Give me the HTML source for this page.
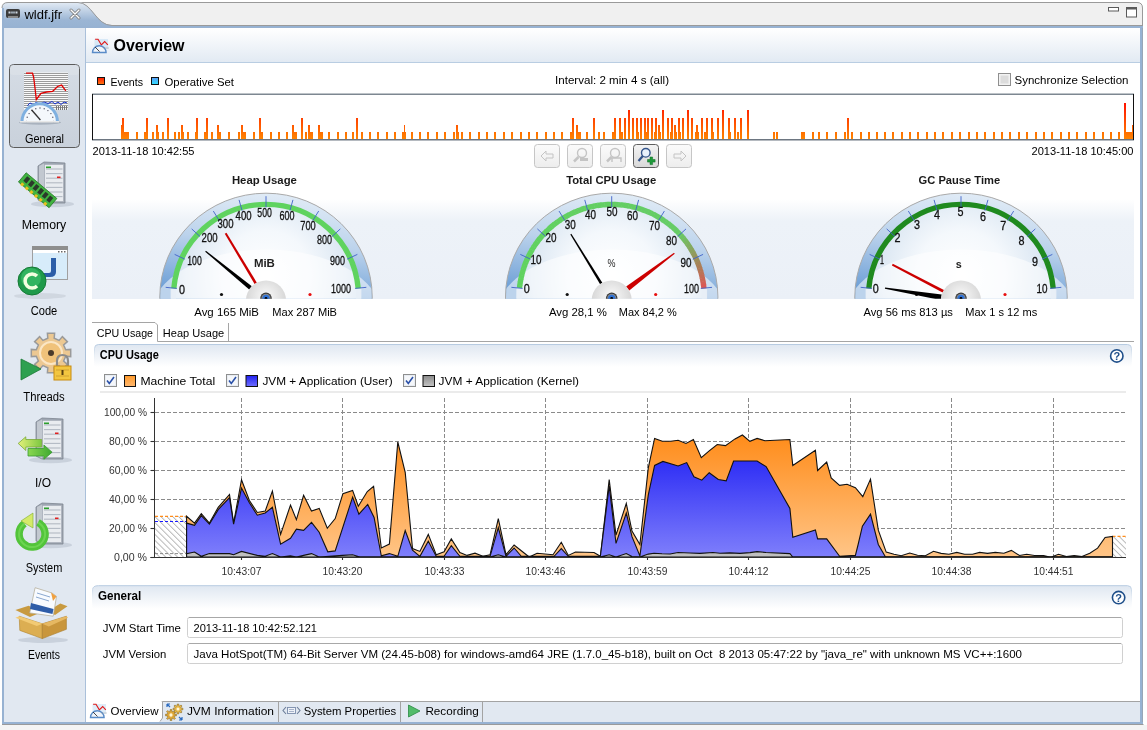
<!DOCTYPE html>
<html><head><meta charset="utf-8"><title>wldf.jfr - Overview</title>
<style>html,body{margin:0;padding:0;background:#fff;overflow:hidden}svg{display:block;will-change:transform}text{font-family:"Liberation Sans", sans-serif}</style>
</head><body>
<svg width="1147" height="730" viewBox="0 0 1147 730">
<defs>
<linearGradient id="tabg" x1="0" y1="0" x2="0" y2="1"><stop offset="0" stop-color="#e4ecf5"/><stop offset="0.7" stop-color="#9bb5d4"/><stop offset="1" stop-color="#97b2d2"/></linearGradient>
<linearGradient id="hdrg" x1="0" y1="0" x2="0" y2="1"><stop offset="0" stop-color="#ffffff"/><stop offset="1" stop-color="#e2eaf3"/></linearGradient>
<linearGradient id="secg" x1="0" y1="0" x2="0" y2="1"><stop offset="0" stop-color="#dfe7f1"/><stop offset="1" stop-color="#ffffff"/></linearGradient>
<linearGradient id="bandg" x1="0" y1="0" x2="0" y2="1"><stop offset="0" stop-color="#ffffff"/><stop offset="0.22" stop-color="#edf2f8"/><stop offset="1" stop-color="#ebf0f7"/></linearGradient>
<linearGradient id="evg" gradientUnits="userSpaceOnUse" x1="0" y1="103" x2="0" y2="139"><stop offset="0" stop-color="#ff1000"/><stop offset="1" stop-color="#ff8400"/></linearGradient>
<linearGradient id="btng" x1="0" y1="0" x2="0" y2="1"><stop offset="0" stop-color="#fbfbfb"/><stop offset="1" stop-color="#ededed"/></linearGradient>
<linearGradient id="btna" x1="0" y1="0" x2="0" y2="1"><stop offset="0" stop-color="#f4f4f4"/><stop offset="1" stop-color="#d8d8d8"/></linearGradient>
<linearGradient id="orng" gradientUnits="userSpaceOnUse" x1="0" y1="435" x2="0" y2="557"><stop offset="0" stop-color="#ff8c1a"/><stop offset="1" stop-color="#ffc587"/></linearGradient>
<linearGradient id="blug" gradientUnits="userSpaceOnUse" x1="0" y1="461" x2="0" y2="557"><stop offset="0" stop-color="#2f2ff5"/><stop offset="1" stop-color="#7f7ffb"/></linearGradient>
<linearGradient id="navbtn" x1="0" y1="0" x2="0" y2="1"><stop offset="0" stop-color="#d5dce5"/><stop offset="1" stop-color="#c9d1db"/></linearGradient>
<radialGradient id="face" cx="0.5" cy="0.95" r="0.62"><stop offset="0" stop-color="#ffffff"/><stop offset="0.55" stop-color="#f3f7fb"/><stop offset="0.8" stop-color="#d6e3f1"/><stop offset="1" stop-color="#9dbde0"/></radialGradient>
<radialGradient id="hub" cx="0.5" cy="0.4" r="0.6"><stop offset="0" stop-color="#fafafa"/><stop offset="1" stop-color="#d0d0d0"/></radialGradient>
<pattern id="hatch" patternUnits="userSpaceOnUse" width="6" height="6" patternTransform="rotate(45)"><rect width="6" height="6" fill="#fff"/><line x1="0" y1="0" x2="0" y2="6" stroke="#a0a0a0" stroke-width="0.8"/></pattern>
<clipPath id="gclip"><rect x="0" y="0" width="1147" height="298.7"/></clipPath>
<linearGradient id="cpuarc" gradientUnits="userSpaceOnUse" x1="680" y1="240" x2="715" y2="290"><stop offset="0" stop-color="#5bd35b"/><stop offset="0.45" stop-color="#a28a55"/><stop offset="1" stop-color="#dc5a5a"/></linearGradient>
</defs>
<rect x="0" y="0" width="1147" height="730" fill="#ffffff"/>
<path d="M78,2 L1137,2 Q1143,2 1143,8 L1143,26 L2,26 Z" fill="#f0f0f0"/>
<path d="M78,2.5 L1137,2.5 Q1142.5,2.5 1142.5,8 L1142.5,724" fill="none" stroke="#9a9a9a" stroke-width="1"/>
<path d="M2,28 L2,8 Q2,2 8,2 L78,2 C92,2 96,25 112,25 L112,28 Z" fill="url(#tabg)"/>
<path d="M2,8 Q2,2.5 8,2.5 L78,2.5 C92,2.5 96,25.5 112,25.5 L1143,25.5" fill="none" stroke="#9a9a9a" stroke-width="1"/>
<rect x="2" y="26" width="1141" height="2" fill="#97b2d2"/>
<rect x="2" y="8" width="2" height="716" fill="#97b2d2"/>
<rect x="1140" y="26" width="2.5" height="698" fill="#97b2d2"/>
<rect x="2" y="722" width="1141" height="2" fill="#97b2d2"/>
<rect x="2" y="724" width="1141.5" height="1" fill="#9a9a9a"/>
<rect x="0" y="725" width="1147" height="5" fill="#f4f4f4"/>
<rect x="4" y="28" width="81" height="694" fill="#e1e8f1"/>
<rect x="85" y="28" width="1" height="694" fill="#aac0da"/>
<rect x="86" y="28" width="1054" height="34" fill="url(#hdrg)"/>
<rect x="86" y="62" width="1054" height="1" fill="#b9cde2"/>
<rect x="6" y="9" width="14" height="9" rx="2" fill="#3c3c3c"/><rect x="8.5" y="11.5" width="2" height="2" fill="#cfd8e2"/><rect x="15.5" y="11.5" width="2" height="2" fill="#cfd8e2"/><rect x="11" y="11.5" width="4" height="2" fill="#9aa5b0"/><rect x="8" y="16" width="10" height="2" fill="#8a8a8a"/>
<text x="24.5" y="19" font-size="12" font-weight="normal" fill="#000" text-anchor="start" textLength="37.5" lengthAdjust="spacingAndGlyphs" >wldf.jfr</text>
<path d="M71,10 L79,18 M79,10 L71,18" stroke="#7a7a7a" stroke-width="3" stroke-linecap="round"/><path d="M71,10 L79,18 M79,10 L71,18" stroke="#fdfdfd" stroke-width="1.4" stroke-linecap="round"/>
<rect x="1108.5" y="7.5" width="10" height="3.5" fill="#fff" stroke="#5a5a5a" stroke-width="1"/>
<rect x="1126.5" y="7.5" width="10" height="9.5" fill="#fff" stroke="#5a5a5a" stroke-width="1"/><rect x="1126.5" y="7.5" width="10" height="2" fill="#5a5a5a"/>
<rect x="9.5" y="64.5" width="70" height="83" rx="4" fill="url(#navbtn)" stroke="#5c5c5c" stroke-width="1"/>
<rect x="10" y="65" width="69" height="10" rx="3" fill="#dde3ea" opacity="0.6"/>
<g><rect x="24" y="72.5" width="44" height="37" fill="#fafafa"/><line x1="24" y1="73.5" x2="68" y2="73.5" stroke="#9c9c9c" stroke-width="1"/><line x1="24" y1="75.5" x2="68" y2="75.5" stroke="#9c9c9c" stroke-width="1"/><line x1="24" y1="77.5" x2="68" y2="77.5" stroke="#9c9c9c" stroke-width="1"/><line x1="24" y1="79.5" x2="68" y2="79.5" stroke="#9c9c9c" stroke-width="1"/><line x1="24" y1="81.5" x2="68" y2="81.5" stroke="#9c9c9c" stroke-width="1"/><line x1="24" y1="83.5" x2="68" y2="83.5" stroke="#9c9c9c" stroke-width="1"/><line x1="24" y1="85.5" x2="68" y2="85.5" stroke="#9c9c9c" stroke-width="1"/><line x1="24" y1="87.5" x2="68" y2="87.5" stroke="#9c9c9c" stroke-width="1"/><line x1="24" y1="89.5" x2="68" y2="89.5" stroke="#9c9c9c" stroke-width="1"/><line x1="24" y1="91.5" x2="68" y2="91.5" stroke="#9c9c9c" stroke-width="1"/><line x1="24" y1="93.5" x2="68" y2="93.5" stroke="#9c9c9c" stroke-width="1"/><line x1="24" y1="95.5" x2="68" y2="95.5" stroke="#9c9c9c" stroke-width="1"/><line x1="24" y1="97.5" x2="68" y2="97.5" stroke="#9c9c9c" stroke-width="1"/><line x1="24" y1="99.5" x2="68" y2="99.5" stroke="#9c9c9c" stroke-width="1"/><line x1="24" y1="101.5" x2="68" y2="101.5" stroke="#9c9c9c" stroke-width="1"/><line x1="24" y1="103.5" x2="68" y2="103.5" stroke="#9c9c9c" stroke-width="1"/><line x1="24" y1="105.5" x2="68" y2="105.5" stroke="#9c9c9c" stroke-width="1"/><line x1="24" y1="107.5" x2="68" y2="107.5" stroke="#9c9c9c" stroke-width="1"/><line x1="56.5" y1="106" x2="56.5" y2="110" stroke="#777" stroke-width="1"/><line x1="58.5" y1="106" x2="58.5" y2="110" stroke="#777" stroke-width="1"/><line x1="60.5" y1="106" x2="60.5" y2="110" stroke="#777" stroke-width="1"/><line x1="62.5" y1="106" x2="62.5" y2="110" stroke="#777" stroke-width="1"/><line x1="64.5" y1="106" x2="64.5" y2="110" stroke="#777" stroke-width="1"/><line x1="66.5" y1="106" x2="66.5" y2="110" stroke="#777" stroke-width="1"/><polyline points="26,73.2 32.5,73.2 33.6,77 35,88 36.3,99.5 41,93.4 46.6,92 52.7,91.3 57.5,86.5 61.6,85.1 65.8,90.9" fill="none" stroke="#e00000" stroke-width="1.3"/><polyline points="27.4,105.7 30,103 33,104.5 36,102.5 40,104 44,102 48,103.5 52,101.5 55,104 58,102 61,104.5 64,102 67,103" fill="none" stroke="#1530d0" stroke-width="1"/><ellipse cx="40" cy="122.5" rx="21" ry="2.2" fill="#9aa4b0" opacity="0.7"/><path d="M20.5,121.5 A19.2,19.2 0 0 1 58.9,121.5 Z" fill="#7fb0e0"/><path d="M23.5,121.5 A16.2,16.2 0 0 1 55.9,121.5 Z" fill="#f4f8fc"/><circle cx="26.5" cy="121.5" r="0.7" fill="#556"/><circle cx="27.2" cy="117.3" r="0.7" fill="#556"/><circle cx="29.1" cy="113.6" r="0.7" fill="#556"/><circle cx="32.1" cy="110.6" r="0.7" fill="#556"/><circle cx="35.8" cy="108.7" r="0.7" fill="#556"/><circle cx="40.0" cy="108.0" r="0.7" fill="#556"/><circle cx="44.2" cy="108.7" r="0.7" fill="#556"/><circle cx="47.9" cy="110.6" r="0.7" fill="#556"/><circle cx="50.9" cy="113.6" r="0.7" fill="#556"/><circle cx="52.8" cy="117.3" r="0.7" fill="#556"/><circle cx="53.5" cy="121.5" r="0.7" fill="#556"/><line x1="31.5" y1="109.8" x2="40.4" y2="120" stroke="#333" stroke-width="1.3"/><rect x="20" y="121" width="39" height="1.5" fill="#e8e8e8"/></g>
<text x="44.5" y="142.5" font-size="12" font-weight="normal" fill="#000" text-anchor="middle" textLength="39" lengthAdjust="spacingAndGlyphs" >General</text>
<ellipse cx="52.5" cy="204" rx="21.6" ry="3.2" fill="#bfc8d3" opacity="0.7"/><path d="M38,166 L44,162 L65,163 L65,203 L44,203 L38,200 Z" fill="#9ea6b2" stroke="#7d8590" stroke-width="0.8"/><path d="M39,166 L44,163.5 L44,202.5 L39,199.5 Z" fill="#c2c8d0"/><rect x="44.5" y="164.5" width="19" height="37" fill="#e9ecf0" stroke="#a3aab4" stroke-width="0.6"/><line x1="46" y1="169.0" x2="62.5" y2="169.0" stroke="#b3bac3" stroke-width="1.1"/><line x1="46" y1="173.6" x2="62.5" y2="173.6" stroke="#b3bac3" stroke-width="1.1"/><line x1="46" y1="178.2" x2="62.5" y2="178.2" stroke="#b3bac3" stroke-width="1.1"/><line x1="46" y1="182.8" x2="62.5" y2="182.8" stroke="#b3bac3" stroke-width="1.1"/><line x1="46" y1="187.4" x2="62.5" y2="187.4" stroke="#b3bac3" stroke-width="1.1"/><line x1="46" y1="192.0" x2="62.5" y2="192.0" stroke="#b3bac3" stroke-width="1.1"/><line x1="46" y1="196.6" x2="62.5" y2="196.6" stroke="#b3bac3" stroke-width="1.1"/><rect x="46" y="166.5" width="5" height="1.6" fill="#2ca02c"/><rect x="57" y="176.5" width="3.5" height="1.6" fill="#e02020"/>
<g transform="translate(37,191) rotate(40)"><rect x="-20" y="-7" width="40" height="12" fill="#41b341" stroke="#2a7d2a" stroke-width="0.8"/><rect x="-17" y="-5" width="4" height="6" fill="#2b3a2b"/><rect x="-11" y="-5" width="4" height="6" fill="#2b3a2b"/><rect x="-5" y="-5" width="4" height="6" fill="#2b3a2b"/><rect x="1" y="-5" width="4" height="6" fill="#2b3a2b"/><rect x="7" y="-5" width="4" height="6" fill="#2b3a2b"/><rect x="13" y="-5" width="4" height="6" fill="#2b3a2b"/><rect x="-17" y="3" width="3" height="3" fill="#e8c020"/><rect x="-11" y="3" width="3" height="3" fill="#e8c020"/><rect x="-5" y="3" width="3" height="3" fill="#e8c020"/><rect x="1" y="3" width="3" height="3" fill="#e8c020"/><rect x="7" y="3" width="3" height="3" fill="#e8c020"/><rect x="13" y="3" width="3" height="3" fill="#e8c020"/></g>
<text x="44" y="229" font-size="12" font-weight="normal" fill="#000" text-anchor="middle" textLength="44.5" lengthAdjust="spacingAndGlyphs" >Memory</text>
<ellipse cx="40" cy="296" rx="26" ry="3" fill="#c4ccd6" opacity="0.6"/>
<rect x="32.5" y="246.5" width="35" height="33" fill="#ffffff" stroke="#a0a0a0" stroke-width="1"/><rect x="32" y="246" width="36" height="4" fill="#8e8e8e"/>
<rect x="33" y="253" width="34" height="26" fill="#d7ecfa"/><rect x="58" y="251" width="1.5" height="1.5" fill="#666"/><rect x="61" y="251" width="1.5" height="1.5" fill="#666"/><rect x="64" y="251" width="1.5" height="1.5" fill="#666"/>
<path d="M51,258 L56,258 L56,272 Q56,277 50,277 L44,277 L44,273 L49,273 Q51,273 51,271 Z" fill="#2b5ea8"/>
<circle cx="32" cy="281" r="14" fill="#1f9a4a" stroke="#157a35" stroke-width="1"/><circle cx="31" cy="278" r="10" fill="#3cbf6a" opacity="0.7"/>
<path d="M37,276 A7,7 0 1 0 37,286" fill="none" stroke="#f4ffe0" stroke-width="3.5"/>
<text x="44" y="315" font-size="12" font-weight="normal" fill="#000" text-anchor="middle" textLength="26.5" lengthAdjust="spacingAndGlyphs" >Code</text>
<polygon points="70.7,349.4 70.7,356.6 65.7,356.2 63.6,361.1 67.4,364.4 62.4,369.4 59.1,365.6 54.2,367.7 54.6,372.7 47.4,372.7 47.8,367.7 42.9,365.6 39.6,369.4 34.6,364.4 38.4,361.1 36.3,356.2 31.3,356.6 31.3,349.4 36.3,349.8 38.4,344.9 34.6,341.6 39.6,336.6 42.9,340.4 47.8,338.3 47.4,333.3 54.6,333.3 54.2,338.3 59.1,340.4 62.4,336.6 67.4,341.6 63.6,344.9 65.7,349.8" fill="#ecc892" stroke="#9a9a9a" stroke-width="1.5"/>
<circle cx="51" cy="353" r="11" fill="#f0c27a" stroke="#fbe6c5" stroke-width="2"/><circle cx="51" cy="353" r="3" fill="#4a3a2a"/>
<path d="M21,359 L41,369 L21,380 Z" fill="#2ea050" stroke="#1b7a35" stroke-width="0.8"/>
<path d="M57,366 L57,361 Q57,355 62.5,355 Q68,355 68,361 L68,366" fill="none" stroke="#8c8c8c" stroke-width="2.2"/>
<rect x="54" y="366" width="17" height="14" fill="#f3c640" stroke="#c98c10" stroke-width="1"/><line x1="56" y1="370" x2="69" y2="370" stroke="#c89a30" stroke-width="0.8"/><line x1="56" y1="376" x2="69" y2="376" stroke="#c89a30" stroke-width="0.8"/><rect x="61.5" y="370" width="2" height="5" fill="#5a4010"/>
<text x="44" y="401" font-size="12" font-weight="normal" fill="#000" text-anchor="middle" textLength="41.5" lengthAdjust="spacingAndGlyphs" >Threads</text>
<ellipse cx="50.5" cy="460" rx="21.6" ry="3.2" fill="#bfc8d3" opacity="0.7"/><path d="M36,422 L42,418 L63,419 L63,459 L42,459 L36,456 Z" fill="#9ea6b2" stroke="#7d8590" stroke-width="0.8"/><path d="M37,422 L42,419.5 L42,458.5 L37,455.5 Z" fill="#c2c8d0"/><rect x="42.5" y="420.5" width="19" height="37" fill="#e9ecf0" stroke="#a3aab4" stroke-width="0.6"/><line x1="44" y1="425.0" x2="60.5" y2="425.0" stroke="#b3bac3" stroke-width="1.1"/><line x1="44" y1="429.6" x2="60.5" y2="429.6" stroke="#b3bac3" stroke-width="1.1"/><line x1="44" y1="434.2" x2="60.5" y2="434.2" stroke="#b3bac3" stroke-width="1.1"/><line x1="44" y1="438.8" x2="60.5" y2="438.8" stroke="#b3bac3" stroke-width="1.1"/><line x1="44" y1="443.4" x2="60.5" y2="443.4" stroke="#b3bac3" stroke-width="1.1"/><line x1="44" y1="448.0" x2="60.5" y2="448.0" stroke="#b3bac3" stroke-width="1.1"/><line x1="44" y1="452.6" x2="60.5" y2="452.6" stroke="#b3bac3" stroke-width="1.1"/><rect x="44" y="422.5" width="5" height="1.6" fill="#2ca02c"/><rect x="55" y="432.5" width="3.5" height="1.6" fill="#e02020"/>
<linearGradient id="arrA" x1="0" y1="0" x2="1" y2="0"><stop offset="0" stop-color="#e4f07a"/><stop offset="1" stop-color="#7cc840"/></linearGradient><linearGradient id="arrB" x1="0" y1="0" x2="1" y2="0"><stop offset="0" stop-color="#8ad850"/><stop offset="1" stop-color="#3ea830"/></linearGradient>
<path d="M18.2,443.4 L25.8,436.8 L25.8,439.5 L41.7,439.5 L41.7,447 L25.8,447 L25.8,450.5 Z" fill="url(#arrA)" stroke="#78a838" stroke-width="0.8"/>
<path d="M52.1,452.2 L43.9,459.3 L43.9,456 L28,456 L28,448.5 L43.9,448.5 L43.9,445 Z" fill="url(#arrB)" stroke="#3a9a32" stroke-width="0.8"/>
<text x="43" y="487" font-size="12" font-weight="normal" fill="#000" text-anchor="middle" textLength="16" lengthAdjust="spacingAndGlyphs" >I/O</text>
<ellipse cx="50.5" cy="545" rx="21.6" ry="3.2" fill="#bfc8d3" opacity="0.7"/><path d="M36,507 L42,503 L63,504 L63,544 L42,544 L36,541 Z" fill="#9ea6b2" stroke="#7d8590" stroke-width="0.8"/><path d="M37,507 L42,504.5 L42,543.5 L37,540.5 Z" fill="#c2c8d0"/><rect x="42.5" y="505.5" width="19" height="37" fill="#e9ecf0" stroke="#a3aab4" stroke-width="0.6"/><line x1="44" y1="510.0" x2="60.5" y2="510.0" stroke="#b3bac3" stroke-width="1.1"/><line x1="44" y1="514.6" x2="60.5" y2="514.6" stroke="#b3bac3" stroke-width="1.1"/><line x1="44" y1="519.2" x2="60.5" y2="519.2" stroke="#b3bac3" stroke-width="1.1"/><line x1="44" y1="523.8" x2="60.5" y2="523.8" stroke="#b3bac3" stroke-width="1.1"/><line x1="44" y1="528.4" x2="60.5" y2="528.4" stroke="#b3bac3" stroke-width="1.1"/><line x1="44" y1="533.0" x2="60.5" y2="533.0" stroke="#b3bac3" stroke-width="1.1"/><line x1="44" y1="537.6" x2="60.5" y2="537.6" stroke="#b3bac3" stroke-width="1.1"/><rect x="44" y="507.5" width="5" height="1.6" fill="#2ca02c"/><rect x="55" y="517.5" width="3.5" height="1.6" fill="#e02020"/>
<path d="M24.5,523.5 A13,13 0 1 0 38,522.5" fill="none" stroke="#52c43a" stroke-width="7.5"/>
<path d="M24.5,523.5 A13,13 0 1 0 38,522.5" fill="none" stroke="#7ee060" stroke-width="2" opacity="0.6"/>
<path d="M21,521 L33,513 L33,528 Z" fill="#d4ea6a" stroke="#8ab83a" stroke-width="0.7"/>
<text x="44" y="572" font-size="12" font-weight="normal" fill="#000" text-anchor="middle" textLength="36.5" lengthAdjust="spacingAndGlyphs" >System</text>
<ellipse cx="43" cy="640" rx="25" ry="3" fill="#bfc8d3" opacity="0.7"/>
<path d="M15.4,610.1 L28.6,605.8 L42,612 L30,617 Z" fill="#c89a40"/>
<path d="M60.3,603.6 L67.5,606.3 L55,615 L48,611 Z" fill="#c89a40"/>
<path d="M29.7,612.9 L35.1,587.7 L52,593 L56.5,596.4 L53.2,616.2 Z" fill="#f8fbff" stroke="#b0a890" stroke-width="0.7"/>
<path d="M51,592.5 L56.5,596.4 L53,601 Z" fill="#f0a040"/>
<path d="M31,603 L53.5,609 L52.5,614 L30,609 Z" fill="#2f5da8"/>
<line x1="37" y1="593" x2="50" y2="597" stroke="#8aa8d0" stroke-width="1"/><line x1="36" y1="597" x2="49" y2="601" stroke="#8aa8d0" stroke-width="1"/>
<path d="M19.2,616.2 L42.3,623.8 L42.3,638.6 L19.8,630.4 Z" fill="#dcae52" stroke="#b08430" stroke-width="0.6"/>
<path d="M42.3,623.8 L66.4,616.2 L66.4,629.3 L42.3,638.6 Z" fill="#c9963c" stroke="#a87a28" stroke-width="0.6"/>
<path d="M19.2,616.2 L42.3,623.8 L36.8,626 L15.4,617.8 Z" fill="#f2ca74"/>
<path d="M42.3,623.8 L66.4,616.2 L68,617.8 L48.8,626.6 Z" fill="#e6b862"/>
<text x="44" y="659" font-size="12" font-weight="normal" fill="#000" text-anchor="middle" textLength="32" lengthAdjust="spacingAndGlyphs" >Events</text>
<line x1="94.5" y1="40.0" x2="108.0" y2="40.0" stroke="#b5d6f0" stroke-width="0.9"/><line x1="94.5" y1="42.0" x2="108.0" y2="42.0" stroke="#b5d6f0" stroke-width="0.9"/><line x1="94.5" y1="44.0" x2="108.0" y2="44.0" stroke="#b5d6f0" stroke-width="0.9"/><line x1="94.5" y1="46.0" x2="108.0" y2="46.0" stroke="#b5d6f0" stroke-width="0.9"/><line x1="94.5" y1="48.0" x2="108.0" y2="48.0" stroke="#b5d6f0" stroke-width="0.9"/><polyline points="95.1,39.3 98.0,39.3 101.3,44.9 104.7,41.5 107.8,44.9" fill="none" stroke="#e01818" stroke-width="1.1"/><path d="M92.5,52.5 A6.8,6.8 0 0 1 106.1,52.5 Z" fill="#f0f5fb" stroke="#5a8cc8" stroke-width="1.4"/><line x1="95.0" y1="47.0" x2="99.5" y2="51.5" stroke="#333" stroke-width="0.9"/><line x1="103.5" y1="48.0" x2="108.5" y2="48.0" stroke="#888" stroke-width="0.8" stroke-dasharray="1 1"/>
<text x="113.5" y="51" font-size="16" font-weight="bold" fill="#000" text-anchor="start" textLength="71" lengthAdjust="spacingAndGlyphs" >Overview</text>
<linearGradient id="lge" x1="0" y1="0" x2="0" y2="1"><stop offset="0" stop-color="#ff1800"/><stop offset="1" stop-color="#ff7a10"/></linearGradient><linearGradient id="lgs" x1="0" y1="0" x2="0" y2="1"><stop offset="0" stop-color="#5a9cf8"/><stop offset="1" stop-color="#30e0ff"/></linearGradient>
<rect x="97.5" y="77.5" width="7" height="7" fill="url(#lge)" stroke="#111" stroke-width="1"/>
<text x="110.5" y="85.5" font-size="11.5" font-weight="normal" fill="#000" text-anchor="start" textLength="32.5" lengthAdjust="spacingAndGlyphs" >Events</text>
<rect x="151.5" y="77.5" width="7" height="7" fill="url(#lgs)" stroke="#111" stroke-width="1"/>
<text x="164.5" y="85.5" font-size="11.5" font-weight="normal" fill="#000" text-anchor="start" textLength="69.5" lengthAdjust="spacingAndGlyphs" >Operative Set</text>
<text x="555" y="83.7" font-size="11.5" font-weight="normal" fill="#000" text-anchor="start" textLength="114" lengthAdjust="spacingAndGlyphs" >Interval: 2 min 4 s (all)</text>
<rect x="998.5" y="73.5" width="12" height="12" fill="#f2f2f2" stroke="#8f8f8f" stroke-width="1"/><rect x="1000.5" y="75.5" width="8" height="8" fill="#dcdcdc"/>
<text x="1014.5" y="84.3" font-size="11.5" font-weight="normal" fill="#000" text-anchor="start" textLength="114" lengthAdjust="spacingAndGlyphs" >Synchronize Selection</text>
<rect x="92" y="94" width="1042" height="46" fill="#ffffff"/>
<g fill="url(#evg)"><rect x="121" y="125" width="1" height="14"/><rect x="122" y="118" width="2" height="21"/><rect x="123" y="132" width="6" height="7"/><rect x="136" y="132" width="2" height="7"/><rect x="144" y="132" width="2" height="7"/><rect x="146" y="118" width="2" height="21"/><rect x="152" y="132" width="2" height="7"/><rect x="156" y="125" width="2" height="14"/><rect x="158" y="132" width="1" height="7"/><rect x="162" y="132" width="2" height="7"/><rect x="167" y="118" width="2" height="21"/><rect x="174" y="132" width="2" height="7"/><rect x="178" y="132" width="2" height="7"/><rect x="181" y="125" width="2" height="14"/><rect x="183" y="132" width="1" height="7"/><rect x="187" y="132" width="2" height="7"/><rect x="195" y="132" width="1" height="7"/><rect x="196" y="118" width="2" height="21"/><rect x="204" y="132" width="2" height="7"/><rect x="206" y="118" width="2" height="21"/><rect x="211" y="132" width="2" height="7"/><rect x="217" y="125" width="2" height="14"/><rect x="219" y="132" width="2" height="7"/><rect x="228" y="132" width="2" height="7"/><rect x="238" y="132" width="2" height="7"/><rect x="241" y="125" width="2" height="14"/><rect x="243" y="132" width="3" height="7"/><rect x="253" y="132" width="2" height="7"/><rect x="259" y="118" width="2" height="21"/><rect x="261" y="132" width="2" height="7"/><rect x="270" y="132" width="2" height="7"/><rect x="278" y="132" width="2" height="7"/><rect x="286" y="132" width="2" height="7"/><rect x="292" y="125" width="2" height="14"/><rect x="294" y="132" width="3" height="7"/><rect x="301" y="118" width="2" height="21"/><rect x="305" y="132" width="2" height="7"/><rect x="308" y="125" width="2" height="14"/><rect x="310" y="132" width="3" height="7"/><rect x="318" y="125" width="2" height="14"/><rect x="320" y="132" width="3" height="7"/><rect x="328" y="132" width="2" height="7"/><rect x="337" y="132" width="2" height="7"/><rect x="345" y="132" width="2" height="7"/><rect x="352" y="132" width="2" height="7"/><rect x="356" y="118" width="2" height="21"/><rect x="361" y="132" width="2" height="7"/><rect x="369" y="132" width="2" height="7"/><rect x="377" y="132" width="2" height="7"/><rect x="386" y="132" width="2" height="7"/><rect x="394" y="132" width="2" height="7"/><rect x="402" y="132" width="2" height="7"/><rect x="404" y="125" width="1" height="14"/><rect x="405" y="132" width="1" height="7"/><rect x="411" y="132" width="2" height="7"/><rect x="419" y="132" width="2" height="7"/><rect x="427" y="132" width="2" height="7"/><rect x="436" y="132" width="2" height="7"/><rect x="444" y="132" width="2" height="7"/><rect x="453" y="132" width="2" height="7"/><rect x="456" y="125" width="2" height="14"/><rect x="458" y="132" width="1" height="7"/><rect x="461" y="132" width="2" height="7"/><rect x="469" y="132" width="2" height="7"/><rect x="478" y="132" width="2" height="7"/><rect x="486" y="132" width="2" height="7"/><rect x="494" y="132" width="2" height="7"/><rect x="503" y="132" width="2" height="7"/><rect x="511" y="132" width="2" height="7"/><rect x="520" y="132" width="2" height="7"/><rect x="528" y="132" width="2" height="7"/><rect x="536" y="132" width="2" height="7"/><rect x="545" y="132" width="2" height="7"/><rect x="553" y="132" width="2" height="7"/><rect x="561" y="132" width="2" height="7"/><rect x="570" y="132" width="2" height="7"/><rect x="572" y="118" width="2" height="21"/><rect x="576" y="125" width="2" height="14"/><rect x="578" y="132" width="3" height="7"/><rect x="586" y="132" width="2" height="7"/><rect x="593" y="118" width="2" height="21"/><rect x="598" y="132" width="2" height="7"/><rect x="603" y="132" width="2" height="7"/><rect x="612" y="132" width="2" height="7"/><rect x="614" y="118" width="2" height="21"/><rect x="619" y="118" width="2" height="21"/><rect x="621" y="132" width="2" height="7"/><rect x="624" y="118" width="2" height="21"/><rect x="628" y="110" width="2" height="29"/><rect x="632" y="118" width="2" height="21"/><rect x="636" y="118" width="2" height="21"/><rect x="638" y="132" width="1" height="7"/><rect x="640" y="118" width="2" height="21"/><rect x="644" y="118" width="2" height="21"/><rect x="646" y="132" width="1" height="7"/><rect x="647" y="118" width="2" height="21"/><rect x="651" y="118" width="2" height="21"/><rect x="654" y="132" width="1" height="7"/><rect x="655" y="118" width="2" height="21"/><rect x="658" y="125" width="2" height="14"/><rect x="660" y="132" width="1" height="7"/><rect x="662" y="110" width="2" height="29"/><rect x="667" y="118" width="2" height="21"/><rect x="670" y="132" width="1" height="7"/><rect x="671" y="118" width="2" height="21"/><rect x="674" y="125" width="2" height="14"/><rect x="676" y="132" width="1" height="7"/><rect x="678" y="118" width="2" height="21"/><rect x="680" y="132" width="1" height="7"/><rect x="682" y="118" width="2" height="21"/><rect x="687" y="110" width="2" height="29"/><rect x="691" y="118" width="2" height="21"/><rect x="695" y="132" width="1" height="7"/><rect x="696" y="125" width="2" height="14"/><rect x="698" y="132" width="1" height="7"/><rect x="701" y="118" width="2" height="21"/><rect x="704" y="132" width="2" height="7"/><rect x="706" y="118" width="2" height="21"/><rect x="711" y="118" width="2" height="21"/><rect x="713" y="132" width="1" height="7"/><rect x="717" y="118" width="2" height="21"/><rect x="722" y="110" width="2" height="29"/><rect x="728" y="118" width="2" height="21"/><rect x="730" y="132" width="1" height="7"/><rect x="734" y="118" width="2" height="21"/><rect x="737" y="132" width="2" height="7"/><rect x="740" y="118" width="2" height="21"/><rect x="747" y="110" width="2" height="29"/><rect x="773" y="132" width="2" height="7"/><rect x="776" y="132" width="2" height="7"/><rect x="801" y="132" width="4" height="7"/><rect x="812" y="132" width="2" height="7"/><rect x="818" y="132" width="2" height="7"/><rect x="826" y="132" width="2" height="7"/><rect x="835" y="132" width="2" height="7"/><rect x="844" y="132" width="2" height="7"/><rect x="847" y="118" width="2" height="21"/><rect x="851" y="132" width="2" height="7"/><rect x="860" y="132" width="2" height="7"/><rect x="868" y="132" width="2" height="7"/><rect x="876" y="132" width="2" height="7"/><rect x="884" y="132" width="2" height="7"/><rect x="892" y="132" width="2" height="7"/><rect x="901" y="132" width="2" height="7"/><rect x="909" y="132" width="2" height="7"/><rect x="917" y="132" width="2" height="7"/><rect x="926" y="132" width="2" height="7"/><rect x="934" y="132" width="2" height="7"/><rect x="942" y="132" width="2" height="7"/><rect x="951" y="132" width="2" height="7"/><rect x="959" y="132" width="2" height="7"/><rect x="968" y="132" width="2" height="7"/><rect x="976" y="132" width="2" height="7"/><rect x="984" y="132" width="2" height="7"/><rect x="993" y="132" width="2" height="7"/><rect x="1001" y="132" width="2" height="7"/><rect x="1009" y="132" width="2" height="7"/><rect x="1018" y="132" width="2" height="7"/><rect x="1026" y="132" width="2" height="7"/><rect x="1035" y="132" width="2" height="7"/><rect x="1043" y="132" width="2" height="7"/><rect x="1051" y="132" width="2" height="7"/><rect x="1060" y="132" width="2" height="7"/><rect x="1068" y="132" width="2" height="7"/><rect x="1076" y="132" width="2" height="7"/><rect x="1085" y="132" width="2" height="7"/><rect x="1093" y="132" width="2" height="7"/><rect x="1102" y="132" width="2" height="7"/><rect x="1110" y="132" width="2" height="7"/><rect x="1118" y="132" width="2" height="7"/><rect x="1124" y="103" width="2" height="36"/><rect x="1126" y="132" width="6" height="7"/><rect x="1132" y="125" width="1" height="14"/></g>
<rect x="92" y="93.5" width="1042" height="1.5" fill="#7d8791"/>
<rect x="92" y="139" width="1042" height="1.5" fill="#6d7681"/>
<rect x="92" y="94" width="1" height="46" fill="#111"/>
<rect x="1133" y="94" width="1" height="46" fill="#111"/>
<text x="92.5" y="154.7" font-size="11.5" font-weight="normal" fill="#000" text-anchor="start" textLength="102" lengthAdjust="spacingAndGlyphs" >2013-11-18 10:42:55</text>
<text x="1133.5" y="154.7" font-size="11.5" font-weight="normal" fill="#000" text-anchor="end" textLength="102" lengthAdjust="spacingAndGlyphs" >2013-11-18 10:45:00</text>
<rect x="534.5" y="144.5" width="25" height="23" rx="3" fill="url(#btng)" stroke="#c6c6c6" stroke-width="1"/>
<rect x="567.5" y="144.5" width="25" height="23" rx="3" fill="url(#btng)" stroke="#c6c6c6" stroke-width="1"/>
<rect x="600.5" y="144.5" width="25" height="23" rx="3" fill="url(#btng)" stroke="#c6c6c6" stroke-width="1"/>
<rect x="633.5" y="144.5" width="25" height="23" rx="3" fill="url(#btna)" stroke="#5e5e5e" stroke-width="1"/>
<rect x="666.5" y="144.5" width="25" height="23" rx="3" fill="url(#btng)" stroke="#c6c6c6" stroke-width="1"/>
<path d="M541,156 L546,151 L546,154 L553,154 L553,158 L546,158 L546,161 Z" fill="none" stroke="#c4c4c4" stroke-width="1"/>
<path d="M686,156 L681,151 L681,154 L674,154 L674,158 L681,158 L681,161 Z" fill="none" stroke="#c4c4c4" stroke-width="1"/>
<circle cx="582" cy="153" r="4.5" fill="none" stroke="#c4c4c4" stroke-width="1.4"/><line x1="578.5" y1="157" x2="574" y2="161.5" stroke="#c4c4c4" stroke-width="2.5"/><rect x="580" y="158" width="8" height="3" fill="#c4c4c4"/>
<circle cx="615" cy="153" r="4.5" fill="none" stroke="#c4c4c4" stroke-width="1.4"/><line x1="611.5" y1="157" x2="607" y2="161.5" stroke="#c4c4c4" stroke-width="2.5"/><path d="M612,162 L612,158 L621,158 L621,162" fill="none" stroke="#c4c4c4" stroke-width="1.4"/>
<circle cx="645.8" cy="152.8" r="4.3" fill="#e8f1fb" stroke="#34548a" stroke-width="1.4"/><line x1="642.8" y1="156" x2="638.5" y2="161" stroke="#34548a" stroke-width="2.2"/><path d="M647.5,159.5 h2.5 v-2.5 h2.6 v2.5 h2.5 v2.6 h-2.5 v2.5 h-2.6 v-2.5 h-2.5 Z" fill="#1e9a3a" stroke="#0c6a22" stroke-width="0.5"/>
<rect x="92" y="199" width="1042" height="100" fill="url(#bandg)"/>
<defs>
<radialGradient id="face1" gradientUnits="userSpaceOnUse" cx="266" cy="275.5" r="100"><stop offset="0" stop-color="#ffffff"/><stop offset="0.45" stop-color="#f4f8fc"/><stop offset="0.8" stop-color="#dde8f3"/><stop offset="1" stop-color="#c6d9ed"/></radialGradient>
<linearGradient id="rim1" gradientUnits="userSpaceOnUse" x1="272" y1="193.5" x2="262" y2="300.5"><stop offset="0" stop-color="#e0ebf6"/><stop offset="0.45" stop-color="#bcd3ec"/><stop offset="1" stop-color="#6a9dd5"/></linearGradient>
<radialGradient id="face2" gradientUnits="userSpaceOnUse" cx="611.7" cy="275.5" r="100"><stop offset="0" stop-color="#ffffff"/><stop offset="0.45" stop-color="#f4f8fc"/><stop offset="0.8" stop-color="#dde8f3"/><stop offset="1" stop-color="#c6d9ed"/></radialGradient>
<linearGradient id="rim2" gradientUnits="userSpaceOnUse" x1="617.7" y1="193.5" x2="607.7" y2="300.5"><stop offset="0" stop-color="#e0ebf6"/><stop offset="0.45" stop-color="#bcd3ec"/><stop offset="1" stop-color="#6a9dd5"/></linearGradient>
<radialGradient id="face3" gradientUnits="userSpaceOnUse" cx="961" cy="275.5" r="100"><stop offset="0" stop-color="#ffffff"/><stop offset="0.45" stop-color="#f4f8fc"/><stop offset="0.8" stop-color="#dde8f3"/><stop offset="1" stop-color="#c6d9ed"/></radialGradient>
<linearGradient id="rim3" gradientUnits="userSpaceOnUse" x1="967" y1="193.5" x2="957" y2="300.5"><stop offset="0" stop-color="#e0ebf6"/><stop offset="0.45" stop-color="#bcd3ec"/><stop offset="1" stop-color="#6a9dd5"/></linearGradient>
</defs>
<g clip-path="url(#gclip)"><ellipse cx="266" cy="297.0" rx="106.2" ry="103.8" fill="url(#rim1)" stroke="#a9a9a9" stroke-width="1"/><circle cx="266" cy="297.0" r="95" fill="url(#face1)"/><clipPath id="fc1"><ellipse cx="266" cy="297.0" rx="105.7" ry="103.3"/></clipPath><ellipse cx="266" cy="314.5" rx="115" ry="65" fill="#ffffff" opacity="0.55" clip-path="url(#fc1)"/><rect x="170.60000000000002" y="288.5" width="5.4" height="14" fill="#e8eef6" opacity="0.9"/><rect x="356.0" y="288.5" width="5.4" height="14" fill="#e8eef6" opacity="0.9"/><path d="M173.78,288.61 A92.6,92.6 0 0 1 358.22,288.61" fill="none" stroke="#5fd35f" stroke-width="5.4"/><line x1="176.91" y1="288.42" x2="165.66" y2="287.34" stroke="#3f62c8" stroke-width="0.9"/><line x1="184.89" y1="259.18" x2="174.64" y2="254.40" stroke="#3f62c8" stroke-width="0.9"/><line x1="200.01" y1="236.53" x2="191.68" y2="228.90" stroke="#3f62c8" stroke-width="0.9"/><line x1="219.24" y1="220.69" x2="213.33" y2="211.05" stroke="#3f62c8" stroke-width="0.9"/><line x1="242.08" y1="210.76" x2="239.06" y2="199.87" stroke="#3f62c8" stroke-width="0.9"/><line x1="266.00" y1="207.50" x2="266.00" y2="196.20" stroke="#3f62c8" stroke-width="0.9"/><line x1="289.92" y1="210.76" x2="292.94" y2="199.87" stroke="#3f62c8" stroke-width="0.9"/><line x1="312.76" y1="220.69" x2="318.67" y2="211.05" stroke="#3f62c8" stroke-width="0.9"/><line x1="331.99" y1="236.53" x2="340.32" y2="228.90" stroke="#3f62c8" stroke-width="0.9"/><line x1="347.11" y1="259.18" x2="357.36" y2="254.40" stroke="#3f62c8" stroke-width="0.9"/><line x1="355.09" y1="288.42" x2="366.34" y2="287.34" stroke="#3f62c8" stroke-width="0.9"/><text x="182" y="294" font-size="12" fill="#111" stroke="#111" stroke-width="0.3" text-anchor="middle" textLength="6" lengthAdjust="spacingAndGlyphs">0</text><text x="194.5" y="265" font-size="12" fill="#111" stroke="#111" stroke-width="0.3" text-anchor="middle" textLength="14.5" lengthAdjust="spacingAndGlyphs">100</text><text x="209.6" y="242" font-size="12" fill="#111" stroke="#111" stroke-width="0.3" text-anchor="middle" textLength="16" lengthAdjust="spacingAndGlyphs">200</text><text x="225.5" y="228" font-size="12" fill="#111" stroke="#111" stroke-width="0.3" text-anchor="middle" textLength="16" lengthAdjust="spacingAndGlyphs">300</text><text x="243.6" y="220" font-size="12" fill="#111" stroke="#111" stroke-width="0.3" text-anchor="middle" textLength="16" lengthAdjust="spacingAndGlyphs">400</text><text x="264.6" y="216.5" font-size="12" fill="#111" stroke="#111" stroke-width="0.3" text-anchor="middle" textLength="14.5" lengthAdjust="spacingAndGlyphs">500</text><text x="287" y="219.6" font-size="12" fill="#111" stroke="#111" stroke-width="0.3" text-anchor="middle" textLength="15" lengthAdjust="spacingAndGlyphs">600</text><text x="308" y="229.5" font-size="12" fill="#111" stroke="#111" stroke-width="0.3" text-anchor="middle" textLength="15.5" lengthAdjust="spacingAndGlyphs">700</text><text x="324.5" y="244" font-size="12" fill="#111" stroke="#111" stroke-width="0.3" text-anchor="middle" textLength="15" lengthAdjust="spacingAndGlyphs">800</text><text x="337.6" y="265.2" font-size="12" fill="#111" stroke="#111" stroke-width="0.3" text-anchor="middle" textLength="15" lengthAdjust="spacingAndGlyphs">900</text><text x="341" y="293.4" font-size="12" fill="#111" stroke="#111" stroke-width="0.3" text-anchor="middle" textLength="20" lengthAdjust="spacingAndGlyphs">1000</text><text x="264.4" y="266.7" font-size="11.5" font-weight="bold" fill="#222" text-anchor="middle" textLength="21" lengthAdjust="spacingAndGlyphs">MiB</text><circle cx="221.5" cy="294.5" r="1.6" fill="#111"/><circle cx="310" cy="294.5" r="1.6" fill="#e81010"/><polygon points="249.17,289.49 205.18,251.67 205.93,250.74 251.83,286.23" fill="#000"/><polygon points="254.58,284.03 224.76,233.81 226.48,232.78 256.81,282.69" fill="#cc0000"/><circle cx="266" cy="300.5" r="20" fill="url(#hub)"/><circle cx="266" cy="298.3" r="5.8" fill="#3a3a3a"/><circle cx="266" cy="298.3" r="4.6" fill="#8a8a8a"/><circle cx="266" cy="298.3" r="3.6" fill="#2f72d6"/><circle cx="266" cy="298.3" r="1.4" fill="#000"/></g>
<g clip-path="url(#gclip)"><ellipse cx="611.7" cy="297.0" rx="106.2" ry="103.8" fill="url(#rim2)" stroke="#a9a9a9" stroke-width="1"/><circle cx="611.7" cy="297.0" r="95" fill="url(#face2)"/><clipPath id="fc2"><ellipse cx="611.7" cy="297.0" rx="105.7" ry="103.3"/></clipPath><ellipse cx="611.7" cy="314.5" rx="115" ry="65" fill="#ffffff" opacity="0.55" clip-path="url(#fc2)"/><rect x="516.3" y="288.5" width="5.4" height="14" fill="#e8eef6" opacity="0.9"/><rect x="701.7" y="288.5" width="5.4" height="14" fill="#e8eef6" opacity="0.9"/><path d="M519.53,288.12 A92.6,92.6 0 0 1 519.85,285.20" fill="none" stroke="#5fd35f" stroke-width="5.4"/><path d="M519.79,285.68 A92.6,92.6 0 0 1 520.35,281.81" fill="none" stroke="#5fd35f" stroke-width="5.4"/><path d="M520.28,282.29 A92.6,92.6 0 0 1 520.98,278.44" fill="none" stroke="#5fd35f" stroke-width="5.4"/><path d="M520.88,278.92 A92.6,92.6 0 0 1 521.73,275.10" fill="none" stroke="#5fd35f" stroke-width="5.4"/><path d="M521.61,275.57 A92.6,92.6 0 0 1 522.60,271.79" fill="none" stroke="#60d260" stroke-width="5.4"/><path d="M522.47,272.25 A92.6,92.6 0 0 1 523.59,268.51" fill="none" stroke="#60d260" stroke-width="5.4"/><path d="M523.44,268.97 A92.6,92.6 0 0 1 524.71,265.27" fill="none" stroke="#60d260" stroke-width="5.4"/><path d="M524.54,265.72 A92.6,92.6 0 0 1 525.94,262.07" fill="none" stroke="#60d260" stroke-width="5.4"/><path d="M525.76,262.52 A92.6,92.6 0 0 1 527.29,258.92" fill="none" stroke="#60d260" stroke-width="5.4"/><path d="M527.09,259.37 A92.6,92.6 0 0 1 528.76,255.83" fill="none" stroke="#60d260" stroke-width="5.4"/><path d="M528.54,256.26 A92.6,92.6 0 0 1 530.34,252.79" fill="none" stroke="#60d260" stroke-width="5.4"/><path d="M530.11,253.21 A92.6,92.6 0 0 1 532.03,249.81" fill="none" stroke="#60d260" stroke-width="5.4"/><path d="M531.78,250.22 A92.6,92.6 0 0 1 533.83,246.89" fill="none" stroke="#60d260" stroke-width="5.4"/><path d="M533.57,247.30 A92.6,92.6 0 0 1 535.74,244.05" fill="none" stroke="#61d161" stroke-width="5.4"/><path d="M535.46,244.44 A92.6,92.6 0 0 1 537.75,241.27" fill="none" stroke="#61d161" stroke-width="5.4"/><path d="M537.46,241.66 A92.6,92.6 0 0 1 539.86,238.57" fill="none" stroke="#61d161" stroke-width="5.4"/><path d="M539.55,238.95 A92.6,92.6 0 0 1 542.07,235.96" fill="none" stroke="#61d161" stroke-width="5.4"/><path d="M541.75,236.32 A92.6,92.6 0 0 1 544.37,233.42" fill="none" stroke="#61d161" stroke-width="5.4"/><path d="M544.04,233.78 A92.6,92.6 0 0 1 546.77,230.98" fill="none" stroke="#61d161" stroke-width="5.4"/><path d="M546.43,231.32 A92.6,92.6 0 0 1 549.26,228.62" fill="none" stroke="#61d161" stroke-width="5.4"/><path d="M548.90,228.95 A92.6,92.6 0 0 1 551.83,226.36" fill="none" stroke="#61d161" stroke-width="5.4"/><path d="M551.46,226.67 A92.6,92.6 0 0 1 554.49,224.19" fill="none" stroke="#61d161" stroke-width="5.4"/><path d="M554.11,224.49 A92.6,92.6 0 0 1 557.22,222.12" fill="none" stroke="#62d062" stroke-width="5.4"/><path d="M556.83,222.41 A92.6,92.6 0 0 1 560.03,220.16" fill="none" stroke="#62d062" stroke-width="5.4"/><path d="M559.62,220.43 A92.6,92.6 0 0 1 562.90,218.30" fill="none" stroke="#62d062" stroke-width="5.4"/><path d="M562.49,218.56 A92.6,92.6 0 0 1 565.85,216.55" fill="none" stroke="#62d062" stroke-width="5.4"/><path d="M565.43,216.79 A92.6,92.6 0 0 1 568.86,214.91" fill="none" stroke="#62d062" stroke-width="5.4"/><path d="M568.43,215.13 A92.6,92.6 0 0 1 571.92,213.38" fill="none" stroke="#62d062" stroke-width="5.4"/><path d="M571.48,213.59 A92.6,92.6 0 0 1 575.04,211.96" fill="none" stroke="#62d062" stroke-width="5.4"/><path d="M574.60,212.16 A92.6,92.6 0 0 1 578.21,210.67" fill="none" stroke="#62d062" stroke-width="5.4"/><path d="M577.76,210.84 A92.6,92.6 0 0 1 581.43,209.49" fill="none" stroke="#62d062" stroke-width="5.4"/><path d="M580.97,209.65 A92.6,92.6 0 0 1 584.69,208.43" fill="none" stroke="#63cf63" stroke-width="5.4"/><path d="M584.22,208.57 A92.6,92.6 0 0 1 587.98,207.49" fill="none" stroke="#63cf63" stroke-width="5.4"/><path d="M587.51,207.61 A92.6,92.6 0 0 1 591.31,206.67" fill="none" stroke="#63cf63" stroke-width="5.4"/><path d="M590.84,206.78 A92.6,92.6 0 0 1 594.67,205.98" fill="none" stroke="#63cf63" stroke-width="5.4"/><path d="M594.19,206.07 A92.6,92.6 0 0 1 598.04,205.41" fill="none" stroke="#63cf63" stroke-width="5.4"/><path d="M597.57,205.49 A92.6,92.6 0 0 1 601.44,204.97" fill="none" stroke="#63cf63" stroke-width="5.4"/><path d="M600.96,205.02 A92.6,92.6 0 0 1 604.85,204.65" fill="none" stroke="#63cf63" stroke-width="5.4"/><path d="M604.37,204.69 A92.6,92.6 0 0 1 608.27,204.46" fill="none" stroke="#63cf63" stroke-width="5.4"/><path d="M607.79,204.48 A92.6,92.6 0 0 1 611.70,204.40" fill="none" stroke="#63cf63" stroke-width="5.4"/><path d="M611.22,204.40 A92.6,92.6 0 0 1 615.13,204.46" fill="none" stroke="#64ce64" stroke-width="5.4"/><path d="M614.64,204.45 A92.6,92.6 0 0 1 618.55,204.65" fill="none" stroke="#64ce64" stroke-width="5.4"/><path d="M618.06,204.62 A92.6,92.6 0 0 1 621.96,204.97" fill="none" stroke="#64ce64" stroke-width="5.4"/><path d="M621.48,204.92 A92.6,92.6 0 0 1 625.36,205.41" fill="none" stroke="#64ce64" stroke-width="5.4"/><path d="M624.88,205.34 A92.6,92.6 0 0 1 628.73,205.98" fill="none" stroke="#64ce64" stroke-width="5.4"/><path d="M628.26,205.89 A92.6,92.6 0 0 1 632.09,206.67" fill="none" stroke="#64ce64" stroke-width="5.4"/><path d="M631.62,206.57 A92.6,92.6 0 0 1 635.42,207.49" fill="none" stroke="#64ce64" stroke-width="5.4"/><path d="M634.95,207.37 A92.6,92.6 0 0 1 638.71,208.43" fill="none" stroke="#64ce64" stroke-width="5.4"/><path d="M638.25,208.29 A92.6,92.6 0 0 1 641.97,209.49" fill="none" stroke="#64ce64" stroke-width="5.4"/><path d="M641.51,209.33 A92.6,92.6 0 0 1 645.19,210.67" fill="none" stroke="#65cd65" stroke-width="5.4"/><path d="M644.73,210.49 A92.6,92.6 0 0 1 648.36,211.96" fill="none" stroke="#65cd65" stroke-width="5.4"/><path d="M647.91,211.77 A92.6,92.6 0 0 1 651.48,213.38" fill="none" stroke="#65cd65" stroke-width="5.4"/><path d="M651.04,213.17 A92.6,92.6 0 0 1 654.54,214.91" fill="none" stroke="#65cd65" stroke-width="5.4"/><path d="M654.11,214.68 A92.6,92.6 0 0 1 657.55,216.55" fill="none" stroke="#65cd65" stroke-width="5.4"/><path d="M657.13,216.31 A92.6,92.6 0 0 1 660.50,218.30" fill="none" stroke="#65cd65" stroke-width="5.4"/><path d="M660.08,218.05 A92.6,92.6 0 0 1 663.37,220.16" fill="none" stroke="#65cd65" stroke-width="5.4"/><path d="M662.97,219.89 A92.6,92.6 0 0 1 666.18,222.12" fill="none" stroke="#65cd65" stroke-width="5.4"/><path d="M665.79,221.84 A92.6,92.6 0 0 1 668.91,224.19" fill="none" stroke="#65cd65" stroke-width="5.4"/><path d="M668.53,223.89 A92.6,92.6 0 0 1 671.57,226.36" fill="none" stroke="#66cc66" stroke-width="5.4"/><path d="M671.20,226.04 A92.6,92.6 0 0 1 674.14,228.62" fill="none" stroke="#66cc66" stroke-width="5.4"/><path d="M673.78,228.29 A92.6,92.6 0 0 1 676.63,230.98" fill="none" stroke="#66cc66" stroke-width="5.4"/><path d="M676.28,230.64 A92.6,92.6 0 0 1 679.03,233.42" fill="none" stroke="#66cc66" stroke-width="5.4"/><path d="M678.69,233.07 A92.6,92.6 0 0 1 681.33,235.96" fill="none" stroke="#67cb66" stroke-width="5.4"/><path d="M681.01,235.59 A92.6,92.6 0 0 1 683.54,238.57" fill="none" stroke="#6dc464" stroke-width="5.4"/><path d="M683.23,238.20 A92.6,92.6 0 0 1 685.65,241.27" fill="none" stroke="#73bd63" stroke-width="5.4"/><path d="M685.36,240.89 A92.6,92.6 0 0 1 687.66,244.05" fill="none" stroke="#79b661" stroke-width="5.4"/><path d="M687.39,243.65 A92.6,92.6 0 0 1 689.57,246.89" fill="none" stroke="#7faf60" stroke-width="5.4"/><path d="M689.31,246.49 A92.6,92.6 0 0 1 691.37,249.81" fill="none" stroke="#85a85f" stroke-width="5.4"/><path d="M691.12,249.39 A92.6,92.6 0 0 1 693.06,252.79" fill="none" stroke="#8ba15d" stroke-width="5.4"/><path d="M692.83,252.36 A92.6,92.6 0 0 1 694.64,255.83" fill="none" stroke="#919a5c" stroke-width="5.4"/><path d="M694.43,255.39 A92.6,92.6 0 0 1 696.11,258.92" fill="none" stroke="#97935a" stroke-width="5.4"/><path d="M695.91,258.48 A92.6,92.6 0 0 1 697.46,262.07" fill="none" stroke="#9d8c59" stroke-width="5.4"/><path d="M697.28,261.62 A92.6,92.6 0 0 1 698.69,265.27" fill="none" stroke="#a48558" stroke-width="5.4"/><path d="M698.53,264.81 A92.6,92.6 0 0 1 699.81,268.51" fill="none" stroke="#ab7e57" stroke-width="5.4"/><path d="M699.66,268.05 A92.6,92.6 0 0 1 700.80,271.79" fill="none" stroke="#b37857" stroke-width="5.4"/><path d="M700.67,271.32 A92.6,92.6 0 0 1 701.67,275.10" fill="none" stroke="#bb7257" stroke-width="5.4"/><path d="M701.56,274.63 A92.6,92.6 0 0 1 702.42,278.44" fill="none" stroke="#c26b56" stroke-width="5.4"/><path d="M702.32,277.97 A92.6,92.6 0 0 1 703.05,281.81" fill="none" stroke="#ca6556" stroke-width="5.4"/><path d="M702.97,281.33 A92.6,92.6 0 0 1 703.55,285.20" fill="none" stroke="#d25f56" stroke-width="5.4"/><path d="M703.42,284.24 A92.6,92.6 0 0 1 703.92,288.61" fill="none" stroke="#d95855" stroke-width="5.4"/><line x1="522.61" y1="288.42" x2="511.36" y2="287.34" stroke="#3f62c8" stroke-width="0.9"/><line x1="530.59" y1="259.18" x2="520.34" y2="254.40" stroke="#3f62c8" stroke-width="0.9"/><line x1="545.71" y1="236.53" x2="537.38" y2="228.90" stroke="#3f62c8" stroke-width="0.9"/><line x1="564.94" y1="220.69" x2="559.03" y2="211.05" stroke="#3f62c8" stroke-width="0.9"/><line x1="587.78" y1="210.76" x2="584.76" y2="199.87" stroke="#3f62c8" stroke-width="0.9"/><line x1="611.70" y1="207.50" x2="611.70" y2="196.20" stroke="#3f62c8" stroke-width="0.9"/><line x1="635.62" y1="210.76" x2="638.64" y2="199.87" stroke="#3f62c8" stroke-width="0.9"/><line x1="658.46" y1="220.69" x2="664.37" y2="211.05" stroke="#3f62c8" stroke-width="0.9"/><line x1="677.69" y1="236.53" x2="686.02" y2="228.90" stroke="#3f62c8" stroke-width="0.9"/><line x1="692.81" y1="259.18" x2="703.06" y2="254.40" stroke="#3f62c8" stroke-width="0.9"/><line x1="700.79" y1="288.42" x2="712.04" y2="287.34" stroke="#3f62c8" stroke-width="0.9"/><text x="526.7" y="292.8" font-size="12" fill="#111" stroke="#111" stroke-width="0.3" text-anchor="middle" textLength="6" lengthAdjust="spacingAndGlyphs">0</text><text x="536" y="264.4" font-size="12" fill="#111" stroke="#111" stroke-width="0.3" text-anchor="middle" textLength="11" lengthAdjust="spacingAndGlyphs">10</text><text x="551" y="242.4" font-size="12" fill="#111" stroke="#111" stroke-width="0.3" text-anchor="middle" textLength="11" lengthAdjust="spacingAndGlyphs">20</text><text x="570.3" y="228.5" font-size="12" fill="#111" stroke="#111" stroke-width="0.3" text-anchor="middle" textLength="11" lengthAdjust="spacingAndGlyphs">30</text><text x="590.4" y="218.8" font-size="12" fill="#111" stroke="#111" stroke-width="0.3" text-anchor="middle" textLength="11" lengthAdjust="spacingAndGlyphs">40</text><text x="612" y="216.1" font-size="12" fill="#111" stroke="#111" stroke-width="0.3" text-anchor="middle" textLength="11" lengthAdjust="spacingAndGlyphs">50</text><text x="632.6" y="219.6" font-size="12" fill="#111" stroke="#111" stroke-width="0.3" text-anchor="middle" textLength="11" lengthAdjust="spacingAndGlyphs">60</text><text x="654.6" y="229.5" font-size="12" fill="#111" stroke="#111" stroke-width="0.3" text-anchor="middle" textLength="11" lengthAdjust="spacingAndGlyphs">70</text><text x="671.6" y="244.5" font-size="12" fill="#111" stroke="#111" stroke-width="0.3" text-anchor="middle" textLength="11" lengthAdjust="spacingAndGlyphs">80</text><text x="686" y="266.9" font-size="12" fill="#111" stroke="#111" stroke-width="0.3" text-anchor="middle" textLength="11" lengthAdjust="spacingAndGlyphs">90</text><text x="691.6" y="292.8" font-size="12" fill="#111" stroke="#111" stroke-width="0.3" text-anchor="middle" textLength="15" lengthAdjust="spacingAndGlyphs">100</text><text x="611.6" y="266.5" font-size="11.5" font-weight="normal" fill="#222" text-anchor="middle" textLength="8" lengthAdjust="spacingAndGlyphs">%</text><circle cx="567.2" cy="294.5" r="1.6" fill="#111"/><circle cx="655.7" cy="294.5" r="1.6" fill="#e81010"/><polygon points="600.11,284.15 570.32,234.38 571.34,233.75 602.33,282.78" fill="#000"/><polygon points="626.11,286.39 674.03,252.78 674.75,253.74 629.24,290.54" fill="#cc0000"/><circle cx="611.7" cy="300.5" r="20" fill="url(#hub)"/><circle cx="611.7" cy="298.3" r="5.8" fill="#3a3a3a"/><circle cx="611.7" cy="298.3" r="4.6" fill="#8a8a8a"/><circle cx="611.7" cy="298.3" r="3.6" fill="#2f72d6"/><circle cx="611.7" cy="298.3" r="1.4" fill="#000"/></g>
<g clip-path="url(#gclip)"><ellipse cx="961" cy="297.0" rx="106.2" ry="103.8" fill="url(#rim3)" stroke="#a9a9a9" stroke-width="1"/><circle cx="961" cy="297.0" r="95" fill="url(#face3)"/><clipPath id="fc3"><ellipse cx="961" cy="297.0" rx="105.7" ry="103.3"/></clipPath><ellipse cx="961" cy="314.5" rx="115" ry="65" fill="#ffffff" opacity="0.55" clip-path="url(#fc3)"/><rect x="865.5999999999999" y="288.5" width="5.4" height="14" fill="#e8eef6" opacity="0.9"/><rect x="1051.0" y="288.5" width="5.4" height="14" fill="#e8eef6" opacity="0.9"/><path d="M868.78,288.61 A92.6,92.6 0 0 1 1053.22,288.61" fill="none" stroke="#1f8a1f" stroke-width="5.4"/><line x1="871.91" y1="288.42" x2="860.66" y2="287.34" stroke="#3f62c8" stroke-width="0.9"/><line x1="879.89" y1="259.18" x2="869.64" y2="254.40" stroke="#3f62c8" stroke-width="0.9"/><line x1="895.01" y1="236.53" x2="886.68" y2="228.90" stroke="#3f62c8" stroke-width="0.9"/><line x1="914.24" y1="220.69" x2="908.33" y2="211.05" stroke="#3f62c8" stroke-width="0.9"/><line x1="937.08" y1="210.76" x2="934.06" y2="199.87" stroke="#3f62c8" stroke-width="0.9"/><line x1="961.00" y1="207.50" x2="961.00" y2="196.20" stroke="#3f62c8" stroke-width="0.9"/><line x1="984.92" y1="210.76" x2="987.94" y2="199.87" stroke="#3f62c8" stroke-width="0.9"/><line x1="1007.76" y1="220.69" x2="1013.67" y2="211.05" stroke="#3f62c8" stroke-width="0.9"/><line x1="1026.99" y1="236.53" x2="1035.32" y2="228.90" stroke="#3f62c8" stroke-width="0.9"/><line x1="1042.11" y1="259.18" x2="1052.36" y2="254.40" stroke="#3f62c8" stroke-width="0.9"/><line x1="1050.09" y1="288.42" x2="1061.34" y2="287.34" stroke="#3f62c8" stroke-width="0.9"/><text x="875.8" y="292.8" font-size="12" fill="#111" stroke="#111" stroke-width="0.3" text-anchor="middle" textLength="6" lengthAdjust="spacingAndGlyphs">0</text><text x="882" y="264.4" font-size="12" fill="#111" stroke="#111" stroke-width="0.3" text-anchor="middle" textLength="4" lengthAdjust="spacingAndGlyphs">1</text><text x="897.4" y="242.4" font-size="12" fill="#111" stroke="#111" stroke-width="0.3" text-anchor="middle" textLength="6" lengthAdjust="spacingAndGlyphs">2</text><text x="917" y="228.5" font-size="12" fill="#111" stroke="#111" stroke-width="0.3" text-anchor="middle" textLength="6" lengthAdjust="spacingAndGlyphs">3</text><text x="936.9" y="218.8" font-size="12" fill="#111" stroke="#111" stroke-width="0.3" text-anchor="middle" textLength="6" lengthAdjust="spacingAndGlyphs">4</text><text x="960.5" y="216.1" font-size="12" fill="#111" stroke="#111" stroke-width="0.3" text-anchor="middle" textLength="6" lengthAdjust="spacingAndGlyphs">5</text><text x="983.1" y="220.9" font-size="12" fill="#111" stroke="#111" stroke-width="0.3" text-anchor="middle" textLength="6" lengthAdjust="spacingAndGlyphs">6</text><text x="1003.3" y="229.5" font-size="12" fill="#111" stroke="#111" stroke-width="0.3" text-anchor="middle" textLength="6" lengthAdjust="spacingAndGlyphs">7</text><text x="1021.4" y="244.9" font-size="12" fill="#111" stroke="#111" stroke-width="0.3" text-anchor="middle" textLength="6" lengthAdjust="spacingAndGlyphs">8</text><text x="1035.1" y="265.5" font-size="12" fill="#111" stroke="#111" stroke-width="0.3" text-anchor="middle" textLength="6" lengthAdjust="spacingAndGlyphs">9</text><text x="1041.9" y="292.8" font-size="12" fill="#111" stroke="#111" stroke-width="0.3" text-anchor="middle" textLength="11" lengthAdjust="spacingAndGlyphs">10</text><text x="958.7" y="267.5" font-size="11.5" font-weight="bold" fill="#222" text-anchor="middle" textLength="6" lengthAdjust="spacingAndGlyphs">s</text><circle cx="916.5" cy="294.5" r="1.6" fill="#111"/><circle cx="1005" cy="294.5" r="1.6" fill="#e81010"/><polygon points="940.81,300.07 884.89,288.78 885.09,287.60 941.70,294.54" fill="#000"/><polygon points="942.58,292.56 891.86,265.48 892.78,263.71 943.97,289.90" fill="#cc0000"/><circle cx="961" cy="300.5" r="20" fill="url(#hub)"/><circle cx="961" cy="298.3" r="5.8" fill="#3a3a3a"/><circle cx="961" cy="298.3" r="4.6" fill="#8a8a8a"/><circle cx="961" cy="298.3" r="3.6" fill="#2f72d6"/><circle cx="961" cy="298.3" r="1.4" fill="#000"/></g>
<text x="264.4" y="184" font-size="11.5" font-weight="bold" fill="#1a1a1a" text-anchor="middle" textLength="65" lengthAdjust="spacingAndGlyphs" >Heap Usage</text>
<text x="611.2" y="184" font-size="11.5" font-weight="bold" fill="#1a1a1a" text-anchor="middle" textLength="90" lengthAdjust="spacingAndGlyphs" >Total CPU Usage</text>
<text x="959.4" y="184" font-size="11.5" font-weight="bold" fill="#1a1a1a" text-anchor="middle" textLength="81.6" lengthAdjust="spacingAndGlyphs" >GC Pause Time</text>
<text x="194.2" y="315.5" font-size="11.5" font-weight="normal" fill="#000" text-anchor="start" textLength="64.8" lengthAdjust="spacingAndGlyphs" >Avg 165 MiB</text>
<text x="272.3" y="315.5" font-size="11.5" font-weight="normal" fill="#000" text-anchor="start" textLength="64.7" lengthAdjust="spacingAndGlyphs" >Max 287 MiB</text>
<text x="548.9" y="315.5" font-size="11.5" font-weight="normal" fill="#000" text-anchor="start" textLength="58" lengthAdjust="spacingAndGlyphs" >Avg 28,1 %</text>
<text x="618.8" y="315.5" font-size="11.5" font-weight="normal" fill="#000" text-anchor="start" textLength="58" lengthAdjust="spacingAndGlyphs" >Max 84,2 %</text>
<text x="863.5" y="315.5" font-size="11.5" font-weight="normal" fill="#000" text-anchor="start" textLength="89.4" lengthAdjust="spacingAndGlyphs" >Avg 56 ms 813 µs</text>
<text x="965.2" y="315.5" font-size="11.5" font-weight="normal" fill="#000" text-anchor="start" textLength="72" lengthAdjust="spacingAndGlyphs" >Max 1 s 12 ms</text>
<path d="M92,322.5 L155,322.5 L157.5,325 L157.5,341.5" fill="none" stroke="#a5a5a5" stroke-width="1"/>
<line x1="157.5" y1="341.5" x2="1134" y2="341.5" stroke="#a5a5a5" stroke-width="1"/>
<line x1="228.5" y1="323" x2="228.5" y2="341" stroke="#a5a5a5" stroke-width="1"/>
<text x="96.8" y="336.8" font-size="11.5" font-weight="normal" fill="#000" text-anchor="start" textLength="56.2" lengthAdjust="spacingAndGlyphs" >CPU Usage</text>
<text x="162.8" y="336.8" font-size="11.5" font-weight="normal" fill="#000" text-anchor="start" textLength="61.4" lengthAdjust="spacingAndGlyphs" >Heap Usage</text>
<linearGradient id="secb" x1="0" y1="0" x2="0" y2="1"><stop offset="0" stop-color="#b7cbe1"/><stop offset="1" stop-color="#ffffff" stop-opacity="0"/></linearGradient>
<path d="M94.5,367 L94.5,348.5 Q94.5,344.5 98.5,344.5 L1127.5,344.5 Q1131.5,344.5 1131.5,348.5 L1131.5,367" fill="url(#secg)" stroke="url(#secb)" stroke-width="1"/>
<text x="99.8" y="358.8" font-size="12" font-weight="bold" fill="#000" text-anchor="start" textLength="59" lengthAdjust="spacingAndGlyphs" >CPU Usage</text>
<circle cx="1116.8" cy="355.9" r="6.2" fill="#fff" stroke="#1f4f8a" stroke-width="1.6"/><text x="1116.8" y="359.9" font-size="11" font-weight="bold" fill="#1f4f8a" text-anchor="middle">?</text>
<rect x="104.5" y="374.5" width="12" height="12" fill="#e8ecf2" stroke="#8e8f8f" stroke-width="1"/><rect x="106" y="376" width="9" height="9" fill="#f5f7fa"/><path d="M107,380.5 L109.3,383.5 L114,377" fill="none" stroke="#2a50a8" stroke-width="1.6"/>
<linearGradient id="lgo" x1="0" y1="0" x2="0" y2="1"><stop offset="0" stop-color="#ff9a2a"/><stop offset="1" stop-color="#ffb870"/></linearGradient>
<linearGradient id="lgb" x1="0" y1="0" x2="0" y2="1"><stop offset="0" stop-color="#2020f0"/><stop offset="1" stop-color="#7070ff"/></linearGradient>
<linearGradient id="lgg" x1="0" y1="0" x2="0" y2="1"><stop offset="0" stop-color="#8a8a8a"/><stop offset="1" stop-color="#c4c4c4"/></linearGradient>
<rect x="124.5" y="375.5" width="11" height="11" fill="url(#lgo)" stroke="#111" stroke-width="1"/>
<text x="140.5" y="384.5" font-size="11.5" font-weight="normal" fill="#000" text-anchor="start" textLength="74.6" lengthAdjust="spacingAndGlyphs" >Machine Total</text>
<rect x="226.5" y="374.5" width="12" height="12" fill="#e8ecf2" stroke="#8e8f8f" stroke-width="1"/><rect x="228" y="376" width="9" height="9" fill="#f5f7fa"/><path d="M229,380.5 L231.3,383.5 L236,377" fill="none" stroke="#2a50a8" stroke-width="1.6"/>
<rect x="246" y="375.5" width="11.5" height="11" fill="url(#lgb)" stroke="#111" stroke-width="1"/>
<text x="262.4" y="384.5" font-size="11.5" font-weight="normal" fill="#000" text-anchor="start" textLength="130.3" lengthAdjust="spacingAndGlyphs" >JVM + Application (User)</text>
<rect x="403.5" y="374.5" width="12" height="12" fill="#e8ecf2" stroke="#8e8f8f" stroke-width="1"/><rect x="405" y="376" width="9" height="9" fill="#f5f7fa"/><path d="M406,380.5 L408.3,383.5 L413,377" fill="none" stroke="#2a50a8" stroke-width="1.6"/>
<rect x="423" y="375.5" width="11.5" height="11" fill="url(#lgg)" stroke="#111" stroke-width="1"/>
<text x="438.6" y="384.5" font-size="11.5" font-weight="normal" fill="#000" text-anchor="start" textLength="140.4" lengthAdjust="spacingAndGlyphs" >JVM + Application (Kernel)</text>
<rect x="100" y="391" width="1026" height="2" fill="#ebebeb"/>
<g stroke="#8a8a8a" stroke-width="1" stroke-dasharray="4 2"><line x1="155" y1="528.5" x2="1126" y2="528.5"/><line x1="155" y1="499.5" x2="1126" y2="499.5"/><line x1="155" y1="470.5" x2="1126" y2="470.5"/><line x1="155" y1="441.5" x2="1126" y2="441.5"/><line x1="155" y1="412.5" x2="1126" y2="412.5"/><line x1="241.5" y1="398" x2="241.5" y2="557"/><line x1="342.5" y1="398" x2="342.5" y2="557"/><line x1="444.5" y1="398" x2="444.5" y2="557"/><line x1="545.5" y1="398" x2="545.5" y2="557"/><line x1="647.5" y1="398" x2="647.5" y2="557"/><line x1="748.5" y1="398" x2="748.5" y2="557"/><line x1="850.5" y1="398" x2="850.5" y2="557"/><line x1="951.5" y1="398" x2="951.5" y2="557"/><line x1="1053.5" y1="398" x2="1053.5" y2="557"/></g>
<pattern id="hatch2" patternUnits="userSpaceOnUse" width="4.2" height="4.2" patternTransform="rotate(-45)"><rect width="4.2" height="4.2" fill="#fff"/><line x1="0.5" y1="0" x2="0.5" y2="4.2" stroke="#8a8a8a" stroke-width="0.6"/></pattern>
<rect x="155" y="516.3" width="31.6" height="40.8" fill="url(#hatch2)"/>
<rect x="1112.5" y="536.4" width="13.5" height="20.7" fill="url(#hatch2)"/>
<line x1="155" y1="516.3" x2="186.6" y2="516.3" stroke="#ff8c1a" stroke-width="1.2" stroke-dasharray="3 2"/>
<line x1="155" y1="521.5" x2="186.6" y2="521.5" stroke="#1a1aff" stroke-width="1.2" stroke-dasharray="3 2"/>
<line x1="155" y1="553.6" x2="186.6" y2="553.6" stroke="#888" stroke-width="1" stroke-dasharray="3 2"/>
<line x1="1112.5" y1="536.4" x2="1126" y2="536.4" stroke="#ff8c1a" stroke-width="1.2" stroke-dasharray="3 2"/>
<path d="M186.6,557.1 L186.6,516.3 L194.5,523.1 L201.3,513.6 L209.4,523.1 L218.2,507.3 L229.5,494.4 L233.6,523.1 L241.5,479.7 L249.4,500.5 L257.3,512.5 L265.2,511.1 L272.4,491.0 L280.6,534.4 L290.5,505.0 L296.4,519.7 L303.6,495.3 L311.5,511.1 L319.2,508.4 L327.3,528.3 L335.2,518.6 L342.9,493.7 L352.6,490.4 L358.3,506.2 L367.3,491.5 L373.6,486.3 L381.3,548.0 L389.4,544.1 L397.8,441.8 L405.2,472.3 L412.5,548.6 L419.9,551.4 L428.3,534.4 L436.2,554.7 L444.1,551.8 L451.3,538.9 L459.9,552.5 L467.1,555.4 L475.0,553.2 L482.9,556.3 L490.1,554.7 L498.3,518.6 L506.0,554.7 L514.1,545.0 L529.2,557.0 L537.1,553.2 L553.0,554.7 L561.3,542.3 L568.3,555.4 L575.5,552.0 L594.0,552.5 L600.4,556.3 L609.2,479.5 L616.0,535.1 L626.3,503.5 L632.0,531.0 L639.9,544.6 L648.3,467.8 L654.6,438.4 L662.3,441.3 L670.8,441.3 L678.1,440.2 L686.0,443.4 L693.4,439.5 L701.3,457.6 L709.2,450.8 L717.2,444.5 L725.5,445.6 L735.0,438.9 L742.4,435.0 L749.9,441.3 L757.1,438.4 L765.0,440.7 L789.9,439.5 L792.8,465.5 L815.4,450.2 L817.6,470.5 L826.7,462.1 L831.2,477.9 L839.6,485.4 L847.0,484.3 L855.4,487.7 L862.8,496.7 L870.5,479.1 L878.3,530.2 L886.2,552.1 L894.0,554.3 L901.2,555.7 L909.7,553.0 L917.5,555.3 L925.4,555.7 L933.5,551.3 L941.1,553.4 L948.9,554.3 L956.8,552.4 L964.6,554.3 L972.5,554.3 L979.7,552.4 L987.5,553.4 L995.3,552.4 L1003.9,553.3 L1011.4,550.4 L1019.5,555.5 L1026.7,554.3 L1034.5,555.5 L1043.6,555.5 L1050.7,557.2 L1058.5,554.3 L1066.4,556.5 L1074.2,555.5 L1082.0,556.5 L1089.8,553.3 L1097.6,548.1 L1105.1,537.4 L1112.5,536.4 L1112.5,557.1 Z" fill="url(#orng)" stroke="#111" stroke-width="1.1" stroke-linejoin="miter"/>
<path d="M186.6,557.1 L186.6,523.1 L194.5,525.4 L201.3,515.7 L209.4,524.2 L218.2,509.6 L229.5,497.6 L233.6,524.2 L241.5,488.1 L249.4,502.8 L257.3,515.2 L265.2,513.0 L272.4,507.3 L280.6,544.1 L290.5,538.3 L296.4,529.2 L303.6,530.3 L311.5,522.4 L319.2,532.2 L327.8,551.8 L335.2,550.9 L352.6,497.1 L358.9,514.1 L367.7,504.4 L374.1,517.5 L381.3,555.9 L389.4,553.6 L397.8,556.3 L405.2,530.6 L412.5,550.2 L419.9,556.3 L428.3,541.2 L436.2,556.3 L444.1,556.3 L451.3,545.7 L459.9,556.3 L490.1,556.3 L498.3,527.6 L506.0,556.3 L514.1,548.0 L521.3,556.3 L554.1,556.3 L561.3,548.6 L568.3,556.3 L600.4,556.3 L609.2,485.8 L616.0,543.4 L626.3,513.0 L632.0,536.7 L639.9,555.9 L648.3,494.9 L654.6,465.5 L662.9,461.4 L678.1,466.0 L686.7,462.6 L693.9,476.8 L701.8,480.2 L709.2,472.7 L718.3,479.5 L726.2,480.9 L733.6,461.0 L757.1,461.0 L766.1,466.6 L789.9,508.4 L792.8,537.3 L815.4,529.9 L817.6,538.9 L826.7,538.9 L839.6,556.3 L855.4,555.4 L858.0,545.0 L862.4,526.2 L870.5,514.1 L878.3,544.5 L885.5,557.0 L1112.5,557.0 L1112.5,557.1 Z" fill="url(#blug)" stroke="#111" stroke-width="1.1" stroke-linejoin="miter"/>
<path d="M186.6,557.1 L186.6,553.6 L194.5,552.0 L201.3,556.3 L209.4,553.6 L229.5,553.6 L233.6,554.7 L241.5,551.4 L257.3,555.4 L265.2,556.3 L272.4,553.6 L280.6,557.0 L290.5,555.9 L296.4,557.0 L303.6,555.4 L311.5,553.6 L319.2,557.0 L342.4,555.4 L352.6,554.7 L360.0,557.0 L490.0,557.0 L498.3,554.7 L506.0,557.0 L600.0,557.0 L609.2,554.7 L616.0,557.0 L626.3,553.6 L632.0,556.5 L639.9,557.0 L648.3,554.1 L654.0,553.2 L662.0,553.8 L670.0,554.0 L678.1,552.5 L690.0,553.0 L700.0,553.4 L713.0,552.5 L720.0,553.3 L730.0,552.9 L740.0,553.4 L750.0,552.6 L757.1,551.6 L766.0,552.5 L789.9,553.6 L792.8,557.0 L1112.5,557.0 L1112.5,557.1 Z" fill="#c0c0c0" stroke="#111" stroke-width="1.1" stroke-linejoin="miter"/>
<line x1="154.5" y1="398" x2="154.5" y2="558" stroke="#333" stroke-width="1"/>
<line x1="150.5" y1="557.5" x2="1126" y2="557.5" stroke="#333" stroke-width="1"/>
<g stroke="#333" stroke-width="1.1"><line x1="150.5" y1="557.5" x2="155" y2="557.5"/><line x1="150.5" y1="528.5" x2="155" y2="528.5"/><line x1="150.5" y1="499.5" x2="155" y2="499.5"/><line x1="150.5" y1="470.5" x2="155" y2="470.5"/><line x1="150.5" y1="441.5" x2="155" y2="441.5"/><line x1="150.5" y1="412.5" x2="155" y2="412.5"/><line x1="241.5" y1="557" x2="241.5" y2="560"/><line x1="342.5" y1="557" x2="342.5" y2="560"/><line x1="444.5" y1="557" x2="444.5" y2="560"/><line x1="545.5" y1="557" x2="545.5" y2="560"/><line x1="647.5" y1="557" x2="647.5" y2="560"/><line x1="748.5" y1="557" x2="748.5" y2="560"/><line x1="850.5" y1="557" x2="850.5" y2="560"/><line x1="951.5" y1="557" x2="951.5" y2="560"/><line x1="1053.5" y1="557" x2="1053.5" y2="560"/></g>
<text x="147" y="560.7" font-size="10" font-weight="normal" fill="#333" text-anchor="end" textLength="33" lengthAdjust="spacingAndGlyphs" >0,00 %</text>
<text x="147" y="531.7" font-size="10" font-weight="normal" fill="#333" text-anchor="end" textLength="38" lengthAdjust="spacingAndGlyphs" >20,00 %</text>
<text x="147" y="502.7" font-size="10" font-weight="normal" fill="#333" text-anchor="end" textLength="38" lengthAdjust="spacingAndGlyphs" >40,00 %</text>
<text x="147" y="473.7" font-size="10" font-weight="normal" fill="#333" text-anchor="end" textLength="38" lengthAdjust="spacingAndGlyphs" >60,00 %</text>
<text x="147" y="444.7" font-size="10" font-weight="normal" fill="#333" text-anchor="end" textLength="38" lengthAdjust="spacingAndGlyphs" >80,00 %</text>
<text x="147" y="415.7" font-size="10" font-weight="normal" fill="#333" text-anchor="end" textLength="43" lengthAdjust="spacingAndGlyphs" >100,00 %</text>
<text x="241.5" y="575" font-size="10" font-weight="normal" fill="#333" text-anchor="middle" textLength="40" lengthAdjust="spacingAndGlyphs" >10:43:07</text>
<text x="342.5" y="575" font-size="10" font-weight="normal" fill="#333" text-anchor="middle" textLength="40" lengthAdjust="spacingAndGlyphs" >10:43:20</text>
<text x="444.5" y="575" font-size="10" font-weight="normal" fill="#333" text-anchor="middle" textLength="40" lengthAdjust="spacingAndGlyphs" >10:43:33</text>
<text x="545.5" y="575" font-size="10" font-weight="normal" fill="#333" text-anchor="middle" textLength="40" lengthAdjust="spacingAndGlyphs" >10:43:46</text>
<text x="647.5" y="575" font-size="10" font-weight="normal" fill="#333" text-anchor="middle" textLength="40" lengthAdjust="spacingAndGlyphs" >10:43:59</text>
<text x="748.5" y="575" font-size="10" font-weight="normal" fill="#333" text-anchor="middle" textLength="40" lengthAdjust="spacingAndGlyphs" >10:44:12</text>
<text x="850.5" y="575" font-size="10" font-weight="normal" fill="#333" text-anchor="middle" textLength="40" lengthAdjust="spacingAndGlyphs" >10:44:25</text>
<text x="951.5" y="575" font-size="10" font-weight="normal" fill="#333" text-anchor="middle" textLength="40" lengthAdjust="spacingAndGlyphs" >10:44:38</text>
<text x="1053.5" y="575" font-size="10" font-weight="normal" fill="#333" text-anchor="middle" textLength="40" lengthAdjust="spacingAndGlyphs" >10:44:51</text>
<path d="M92.6,609 L92.6,589.7 Q92.6,585.7 98.5,585.7 L1127.5,585.7 Q1131.5,585.7 1131.5,589.7 L1131.5,609" fill="url(#secg)" stroke="url(#secb)" stroke-width="1"/>
<text x="97.9" y="600.2" font-size="12" font-weight="bold" fill="#000" text-anchor="start" textLength="43.3" lengthAdjust="spacingAndGlyphs" >General</text>
<circle cx="1118.6" cy="597.6" r="6.2" fill="#fff" stroke="#1f4f8a" stroke-width="1.6"/><text x="1118.6" y="601.6" font-size="11" font-weight="bold" fill="#1f4f8a" text-anchor="middle">?</text>
<text x="102.8" y="631.7" font-size="11.5" font-weight="normal" fill="#000" text-anchor="start" textLength="78.1" lengthAdjust="spacingAndGlyphs" >JVM Start Time</text>
<text x="102.8" y="657.5" font-size="11.5" font-weight="normal" fill="#000" text-anchor="start" textLength="63.5" lengthAdjust="spacingAndGlyphs" >JVM Version</text>
<rect x="187.5" y="617.5" width="935" height="20" rx="2" fill="#fff" stroke="#d0d0d0" stroke-width="1"/><line x1="189" y1="617.5" x2="1121" y2="617.5" stroke="#a8a8a8" stroke-width="1"/>
<rect x="187.5" y="643.5" width="935" height="20" rx="2" fill="#fff" stroke="#d0d0d0" stroke-width="1"/><line x1="189" y1="643.5" x2="1121" y2="643.5" stroke="#a8a8a8" stroke-width="1"/>
<text x="193.5" y="631.7" font-size="11.5" font-weight="normal" fill="#000" text-anchor="start" textLength="123.5" lengthAdjust="spacingAndGlyphs" >2013-11-18 10:42:52.121</text>
<text x="193.5" y="657.5" font-size="11.5" font-weight="normal" fill="#000" text-anchor="start" textLength="828.5" lengthAdjust="spacingAndGlyphs" xml:space="preserve">Java HotSpot(TM) 64-Bit Server VM (24.45-b08) for windows-amd64 JRE (1.7.0_45-b18), built on Oct  8 2013 05:47:22 by "java_re" with unknown MS VC++:1600</text>
<rect x="86" y="701" width="1054" height="21" fill="#e1e8f1"/>
<line x1="161" y1="701.5" x2="1140" y2="701.5" stroke="#a3a3a3" stroke-width="1"/>
<path d="M86,701 L86,722 L160,722 L163,718 L163,702 L161,701 Z" fill="#fff"/>
<path d="M162.5,701.5 L162.5,718 L160,721.5" fill="none" stroke="#a3a3a3" stroke-width="1"/>
<line x1="278.5" y1="702" x2="278.5" y2="722" stroke="#a3a3a3" stroke-width="1"/>
<line x1="400.5" y1="702" x2="400.5" y2="722" stroke="#a3a3a3" stroke-width="1"/>
<line x1="482.5" y1="702" x2="482.5" y2="722" stroke="#a3a3a3" stroke-width="1"/>
<line x1="92.5" y1="705.0" x2="106.0" y2="705.0" stroke="#b5d6f0" stroke-width="0.9"/><line x1="92.5" y1="707.0" x2="106.0" y2="707.0" stroke="#b5d6f0" stroke-width="0.9"/><line x1="92.5" y1="709.0" x2="106.0" y2="709.0" stroke="#b5d6f0" stroke-width="0.9"/><line x1="92.5" y1="711.0" x2="106.0" y2="711.0" stroke="#b5d6f0" stroke-width="0.9"/><line x1="92.5" y1="713.0" x2="106.0" y2="713.0" stroke="#b5d6f0" stroke-width="0.9"/><polyline points="93.1,704.3 96.0,704.3 99.3,709.9 102.7,706.5 105.8,709.9" fill="none" stroke="#e01818" stroke-width="1.1"/><path d="M90.5,717.5 A6.8,6.8 0 0 1 104.1,717.5 Z" fill="#f0f5fb" stroke="#5a8cc8" stroke-width="1.4"/><line x1="93.0" y1="712.0" x2="97.5" y2="716.5" stroke="#333" stroke-width="0.9"/><line x1="101.5" y1="713.0" x2="106.5" y2="713.0" stroke="#888" stroke-width="0.8" stroke-dasharray="1 1"/>
<text x="110.5" y="715" font-size="11.5" font-weight="normal" fill="#000" text-anchor="start" textLength="48.1" lengthAdjust="spacingAndGlyphs" >Overview</text>
<polygon points="176.4,714.1 176.4,715.9 174.6,715.8 174.2,717.0 175.5,718.2 174.2,719.5 173.0,718.2 171.8,718.6 171.9,720.4 170.1,720.4 170.2,718.6 169.0,718.2 167.8,719.5 166.5,718.2 167.8,717.0 167.4,715.8 165.6,715.9 165.6,714.1 167.4,714.2 167.8,713.0 166.5,711.8 167.8,710.5 169.0,711.8 170.2,711.4 170.1,709.6 171.9,709.6 171.8,711.4 173.0,711.8 174.2,710.5 175.5,711.8 174.2,713.0 174.6,714.2" fill="#e0a838" stroke="#8a6a20" stroke-width="0.6"/><circle cx="171" cy="715" r="1.65" fill="#fff6d8"/>
<polygon points="182.9,708.2 182.9,709.8 181.3,709.8 180.9,710.8 182.1,711.9 180.9,713.1 179.8,711.9 178.8,712.3 178.8,713.9 177.2,713.9 177.2,712.3 176.2,711.9 175.1,713.1 173.9,711.9 175.1,710.8 174.7,709.8 173.1,709.8 173.1,708.2 174.7,708.2 175.1,707.2 173.9,706.1 175.1,704.9 176.2,706.1 177.2,705.7 177.2,704.1 178.8,704.1 178.8,705.7 179.8,706.1 180.9,704.9 182.1,706.1 180.9,707.2 181.3,708.2" fill="#e8b848" stroke="#8a6a20" stroke-width="0.6"/><circle cx="178" cy="709" r="1.5" fill="#fff6d8"/>
<path d="M167,704 L170,707 M167,704 L167,707 M167,704 L170,704" stroke="#2a6ac0" stroke-width="1.2"/><path d="M182,720 L179,717 M182,720 L182,717 M182,720 L179,720" stroke="#2a6ac0" stroke-width="1.2"/>
<text x="186.9" y="715" font-size="11.5" font-weight="normal" fill="#000" text-anchor="start" textLength="87.1" lengthAdjust="spacingAndGlyphs" >JVM Information</text>
<path d="M286,714 L283,710.5 L286,707 M297,707 L300,710.5 L297,714" fill="none" stroke="#6a7c98" stroke-width="1.1"/><rect x="287.5" y="707.5" width="8" height="6" fill="#eef2f8" stroke="#7a8cac" stroke-width="0.9"/><line x1="289" y1="709.5" x2="294" y2="709.5" stroke="#8a9ab8" stroke-width="0.7"/><line x1="289" y1="711.5" x2="294" y2="711.5" stroke="#8a9ab8" stroke-width="0.7"/>
<text x="303.7" y="715" font-size="11.5" font-weight="normal" fill="#000" text-anchor="start" textLength="92.5" lengthAdjust="spacingAndGlyphs" >System Properties</text>
<path d="M408.5,705 L420,711 L408.5,717 Z" fill="#52bc6a" stroke="#2a8a44" stroke-width="0.8"/>
<text x="425.4" y="715" font-size="11.5" font-weight="normal" fill="#000" text-anchor="start" textLength="53.4" lengthAdjust="spacingAndGlyphs" >Recording</text>
</svg>
</body></html>
